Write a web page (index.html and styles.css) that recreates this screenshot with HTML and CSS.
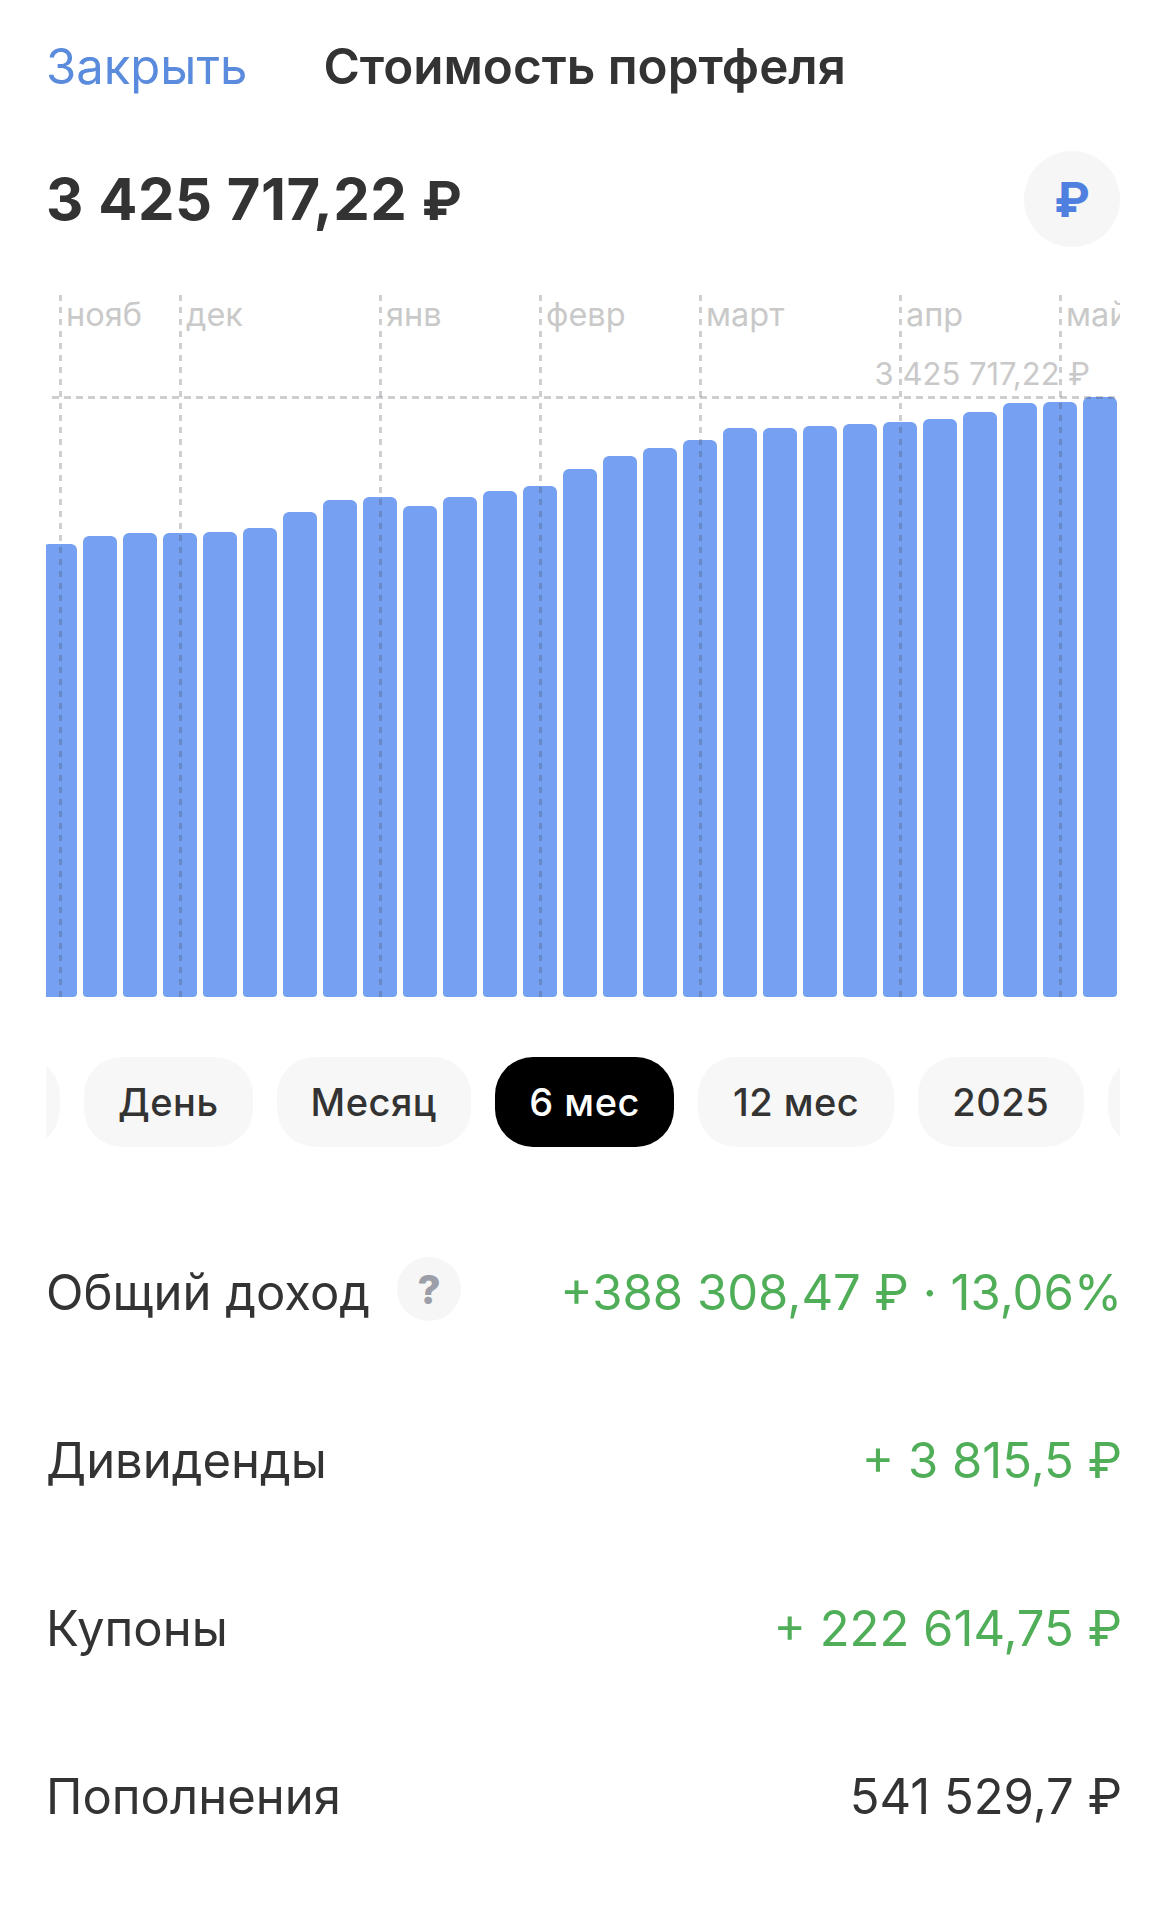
FILE: index.html
```html
<!DOCTYPE html>
<html lang="ru">
<head>
    <meta charset="UTF-8">
    <meta name="viewport" content="width=device-width, initial-scale=1.0">
    <title>Стоимость портфеля</title>
    <link rel="stylesheet" href="styles.css">
</head>
<body>
    <div class="page">
        <header class="top">
            <a class="close">Закрыть</a>
            <h1 class="title">Стоимость портфеля</h1>
        </header>

        <div class="total">
            <span class="total-value">3 425 717,22 <span class="rub">₽</span></span>
            <button class="currency">₽</button>
        </div>

        <div class="chart">
            <div class="bars">
                <div class="bar" style="height: 453px"></div>
                <div class="bar" style="height: 461px"></div>
                <div class="bar" style="height: 464px"></div>
                <div class="bar" style="height: 464px"></div>
                <div class="bar" style="height: 465px"></div>
                <div class="bar" style="height: 469px"></div>
                <div class="bar" style="height: 485px"></div>
                <div class="bar" style="height: 497px"></div>
                <div class="bar" style="height: 500px"></div>
                <div class="bar" style="height: 491px"></div>
                <div class="bar" style="height: 500px"></div>
                <div class="bar" style="height: 506px"></div>
                <div class="bar" style="height: 511px"></div>
                <div class="bar" style="height: 528px"></div>
                <div class="bar" style="height: 541px"></div>
                <div class="bar" style="height: 549px"></div>
                <div class="bar" style="height: 557px"></div>
                <div class="bar" style="height: 569px"></div>
                <div class="bar" style="height: 569px"></div>
                <div class="bar" style="height: 571px"></div>
                <div class="bar" style="height: 573px"></div>
                <div class="bar" style="height: 575px"></div>
                <div class="bar" style="height: 578px"></div>
                <div class="bar" style="height: 585px"></div>
                <div class="bar" style="height: 594px"></div>
                <div class="bar" style="height: 595px"></div>
                <div class="bar" style="height: 600px"></div>
            </div>
            <div class="max-line"></div>
            <span class="max-label">3 425 717,22 ₽</span>
            <div class="month" style="left: 13px">нояб</div>
            <div class="month" style="left: 133px">дек</div>
            <div class="month" style="left: 333px">янв</div>
            <div class="month" style="left: 493px">февр</div>
            <div class="month" style="left: 653px">март</div>
            <div class="month" style="left: 853px">апр</div>
            <div class="month" style="left: 1013px">май</div>
        </div>

        <div class="periods">
            <span class="pill pill-cut-left"></span>
            <span class="pill">День</span>
            <span class="pill">Месяц</span>
            <span class="pill pill-num pill-active">6 мес</span>
            <span class="pill pill-num">12 мес</span>
            <span class="pill pill-num">2025</span>
            <span class="pill pill-cut-right"></span>
        </div>

        <div class="stats">
            <div class="row">
                <div class="row-label">Общий доход <span class="hint">?</span></div>
                <div class="row-value green">+388 308,47 ₽ · 13,06%</div>
            </div>
            <div class="row">
                <div class="row-label">Дивиденды</div>
                <div class="row-value green">+ 3 815,5 ₽</div>
            </div>
            <div class="row">
                <div class="row-label">Купоны</div>
                <div class="row-value green">+ 222 614,75 ₽</div>
            </div>
            <div class="row">
                <div class="row-label">Пополнения</div>
                <div class="row-value">541 529,7 ₽</div>
            </div>
        </div>
    </div>
</body>
</html>
```

FILE: styles.css
```css
* {
    margin: 0;
    padding: 0;
    box-sizing: border-box;
}

body {
    background: #fff;
    font-family: Inter, "Noto Sans", sans-serif;
    color: #333;
}

.page {
    width: 1168px;
    height: 1905px;
    padding: 0 48px 0 46px;
    overflow: hidden;
}

.top {
    display: flex;
    align-items: center;
    gap: 76px;
    height: 60px;
    margin-top: 36px;
}

.close {
    font-size: 49px;
    color: #5b8bdc;
}

.title {
    font-size: 49.4px;
    font-weight: 600;
    color: #333;
}

.total {
    display: flex;
    justify-content: space-between;
    align-items: center;
    margin-top: 55px;
    height: 96px;
}

.total-value {
    font-size: 58px;
    font-weight: 700;
    letter-spacing: 0.5px;
}

.rub {
    font-size: 54px;
}

.currency {
    width: 96px;
    height: 96px;
    border: none;
    border-radius: 50%;
    background: #f6f6f6;
    color: #4f80e0;
    font-family: inherit;
    font-size: 48px;
    font-weight: 700;
}

.chart {
    position: relative;
    margin-top: 48px;
    width: 1074px;
    height: 702px;
    overflow: hidden;
}

.bars {
    display: flex;
    align-items: flex-end;
    gap: 6px;
    height: 702px;
    margin-left: -3px;
}

.bar {
    flex: 0 0 34px;
    background: #76a1f3;
    border-radius: 6px 6px 4px 4px;
}

.max-line {
    position: absolute;
    left: 6px;
    right: 0;
    top: 101px;
    height: 3px;
    background: repeating-linear-gradient(to right, rgba(60, 60, 70, 0.25) 0 7px, transparent 7px 12px);
}

.max-label {
    position: absolute;
    right: 30px;
    top: 60px;
    font-size: 31px;
    color: #c9c9c9;
}

.month {
    position: absolute;
    top: 0;
    height: 702px;
    width: 3px;
    background: repeating-linear-gradient(to bottom, rgba(60, 60, 70, 0.25) 0 6px, transparent 6px 12px);
    font-size: 32.5px;
    color: #c9c9c9;
    white-space: nowrap;
    text-indent: 7px;
    line-height: 36px;
    padding-top: 2px;
}

.periods {
    display: flex;
    gap: 24px;
    margin-top: 60px;
    width: 1074px;
    height: 90px;
    overflow: hidden;
}

.pill {
    display: flex;
    flex: none;
    align-items: center;
    justify-content: center;
    height: 90px;
    padding: 0 34px;
    border-radius: 38px;
    background: #f7f7f7;
    font-size: 38px;
    font-weight: 550;
    letter-spacing: 0.5px;
    color: #333;
}

.pill-num {
    padding: 0 34.5px;
}

.pill-active {
    background: #000;
    color: #fff;
}

.pill-cut-left {
    width: 100px;
    margin-left: -86px;
}

.pill-cut-right {
    width: 100px;
}

.stats {
    margin-top: 61px;
    margin-right: -2px;
}

.row {
    display: flex;
    justify-content: space-between;
    align-items: center;
    height: 168px;
    font-size: 49px;
}

.row-label {
    display: flex;
    align-items: center;
    gap: 27px;
}

.green {
    color: #4fae57;
}

.hint {
    display: flex;
    align-items: center;
    justify-content: center;
    width: 64px;
    height: 64px;
    margin-top: -6px;
    border-radius: 50%;
    background: #f6f6f6;
    color: #9c9ea8;
    font-size: 40px;
    font-weight: 800;
}
```
